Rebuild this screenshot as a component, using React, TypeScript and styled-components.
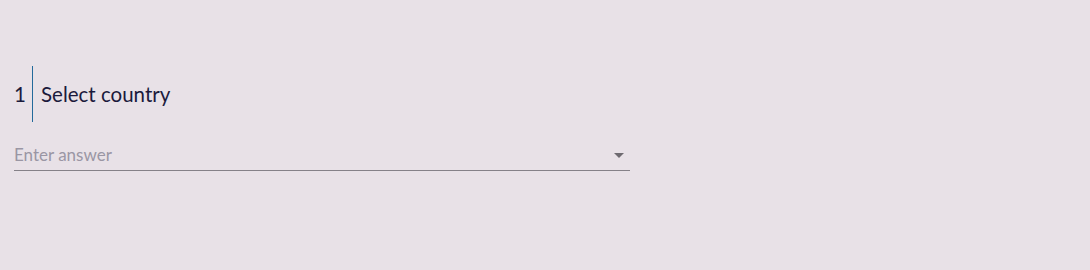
import { createGlobalStyle, styled } from "styled-components";

const GlobalStyle = createGlobalStyle`
  html, body {
    margin: 0;
    padding: 0;
    background: #e8e1e7;
  }
  body {
    font-family: Lato, "Noto Sans", sans-serif;
    width: 1090px;
    height: 270px;
    overflow: hidden;
  }
`;

const Page = styled.div`
  padding: 66px 0 0 14px;
`;

const Question = styled.div`
  display: flex;
  align-items: center;
  height: 56px;
`;

const Number = styled.span`
  font-size: 20.5px;
  color: #1b1a3c;
  width: 18px;
  margin-top: -1px;
`;

const Divider = styled.span`
  width: 1px;
  align-self: stretch;
  background: #236a9b;
  margin-right: 8px;
`;

const Label = styled.span`
  font-size: 20.5px;
  color: #1b1a3c;
  margin-top: -1px;
`;

const Field = styled.div`
  display: flex;
  align-items: center;
  width: 616px;
  height: 31px;
  margin-top: 18px;
  border-bottom: 1px solid #858188;
  box-sizing: border-box;
`;

const Input = styled.input`
  flex: 1;
  border: none;
  outline: none;
  background: transparent;
  padding: 0 0 2px;
  font-family: Lato, "Noto Sans", sans-serif;
  font-size: 17px;
  color: #1b1a3c;

  &::placeholder {
    color: #9a96a4;
  }
`;

const Caret = styled.span`
  width: 0;
  height: 0;
  border-left: 5px solid transparent;
  border-right: 5px solid transparent;
  border-top: 5px solid #6e6a70;
  margin-right: 6px;
`;

export default function App() {
  return (
    <>
      <GlobalStyle />
      <Page>
        <Question>
          <Number>1</Number>
          <Divider />
          <Label>Select country</Label>
        </Question>
        <Field>
          <Input placeholder="Enter answer" />
          <Caret />
        </Field>
      </Page>
    </>
  );
}
